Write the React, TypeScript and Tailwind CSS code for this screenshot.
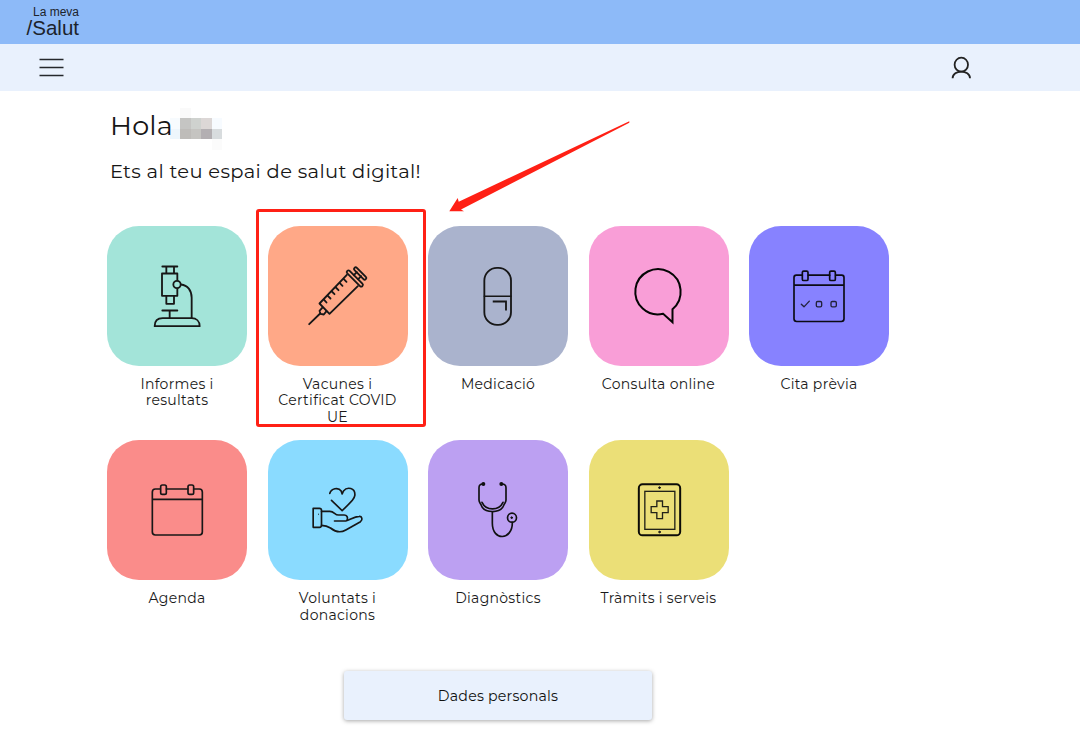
import type { ReactNode } from 'react'

interface TileItem {
  label: string
  color: string
  icon: ReactNode
  highlighted?: boolean
}

function TileIcon({ viewBox, children }: { viewBox: string; children: ReactNode }) {
  return (
    <svg
      viewBox={viewBox}
      className="h-full w-full"
      fill="none"
      stroke="#171717"
      strokeWidth={5.5}
      strokeLinecap="round"
      strokeLinejoin="round"
    >
      {children}
    </svg>
  )
}

const microscope = (
  <TileIcon viewBox="-99 -73.5 420 420">
    <path d="M67 48H112M79 48V69M102 48V69M66 69H112V136H66ZM79 136V160H102V136" />
    <path d="M123 102C143 104 155 120 155 142V203M67 180H112M89 180V203" />
    <path d="M44 227H179C179 212 169 203 155 203H68C53 203 44 212 44 227Z" />
    <circle cx="111" cy="102" r="11" fill="#a3e4d9" />
  </TileIcon>
)

const syringe = (
  <TileIcon viewBox="-82.5 -73.5 420 420">
    <path d="M41 221L74 189M154 73L72 159L102 190L187 107" />
    <path d="M80 172L72 181L75 190L85 192L93 182" />
    <path d="M86 148L93 156M97 136L105 144M109 123L117 131M121 111L129 119M133 98L141 106M145 86L153 94" />
    <rect x="-32" y="-5" width="64" height="10" rx="5" transform="translate(178 84) rotate(45)" />
    <rect x="-24" y="-5" width="48" height="10" rx="5" transform="translate(194 69) rotate(45)" />
    <path d="M175 74L184 65M188 86L197 77" />
  </TileIcon>
)

const pill = (
  <TileIcon viewBox="-111 -88.5 420 420">
    <rect x="58" y="37" width="80" height="171" rx="38" />
    <path d="M58 122H138" strokeWidth={4.5} />
    <path d="M86 138H123V162" strokeLinecap="square" strokeLinejoin="miter" />
  </TileIcon>
)

const bubble = (
  <TileIcon viewBox="-94.5 -88.5 420 420">
    <path
      d="M156 161A68 68 0 1 0 128 175L156 200Z"
      stroke="#050505"
      strokeWidth={6}
      strokeLinejoin="miter"
    />
  </TileIcon>
)

const appointment = (
  <TileIcon viewBox="387 -88.5 420 420">
    <g stroke="#0b0b14" strokeWidth={5}>
      <path d="M547 59H529Q522 59 522 66V190Q522 198 530 198H664Q672 198 672 190V66Q672 59 665 59H647M565 59H629M522 89H672" />
      <rect x="547" y="47" width="17" height="28" rx="4" />
      <rect x="629" y="47" width="17" height="28" rx="4" />
    </g>
    <g stroke="#22223a" strokeWidth={4}>
      <path d="M544 146L552 154L568 137" />
      <rect x="589" y="138" width="16" height="16" rx="4" />
      <rect x="633" y="138" width="16" height="16" rx="4" />
    </g>
  </TileIcon>
)

const agenda = (
  <TileIcon viewBox="-99 -90 420 420">
    <g strokeWidth={5}>
      <path d="M61 57H46Q37 57 37 66V186Q37 195 46 195H178Q187 195 187 186V66Q187 57 178 57H161M79 57H144M37 88H187" />
      <rect x="62" y="45" width="17" height="28" rx="5" />
      <rect x="144" y="45" width="17" height="28" rx="5" />
    </g>
  </TileIcon>
)

const donation = (
  <TileIcon viewBox="382.5 -90 420 420">
    <g strokeWidth={5}>
      <path d="M568 70C572 56 593 50 602 63L605 72L609 63C620 49 645 53 643 76C642 85 637 91 605 122L573 91" />
      <path d="M518 115H537Q543 115 543 121V166Q543 172 537 172H518Z" />
      <path d="M543 124H568C582 124 582 135 594 135H611C619 135 623 142 620 149" />
      <path d="M582 153H616C627 151 640 140 656 139C664 138 668 149 660 155L616 180C598 190 581 183 570 174C561 168 555 166 543 166" />
    </g>
    <path d="M534 132V134" strokeWidth={2} />
  </TileIcon>
)

const stethoscope = (
  <TileIcon viewBox="-96 -90 420 420">
    <g stroke="#111" strokeWidth={5}>
      <path d="M68 42C59 42 57 46 57 53V90C57 97 61 99 63 104C72 131 122 132 132 104C134 99 138 97 138 90V53C138 46 135 42 126 42" />
      <path d="M66 97C78 123 117 123 129 97M97 126V160C97 214 157 212 157 158" />
      <circle cx="70" cy="42" r="3.5" fill="#111" />
      <circle cx="124" cy="42" r="3.5" fill="#111" />
      <circle cx="156" cy="143" r="13.5" />
      <circle cx="155" cy="143" r="2.5" fill="#111" strokeWidth={3} />
    </g>
  </TileIcon>
)

const tablet = (
  <TileIcon viewBox="-94.5 -90 420 420">
    <rect x="55" y="43" width="124" height="153" rx="11" stroke="#0c0c08" strokeWidth={6} />
    <rect x="73" y="64" width="90" height="114" stroke="#222218" strokeWidth={4} strokeLinejoin="miter" />
    <path
      d="M109 93H126V110H143V128H126V146H109V128H92V110H109Z"
      stroke="#222218"
      strokeWidth={4}
      strokeLinejoin="miter"
    />
    <circle cx="117" cy="53" r="2.5" fill="#171717" strokeWidth={3} />
    <circle cx="117" cy="186" r="2.5" fill="#171717" strokeWidth={3} />
  </TileIcon>
)

const tiles: TileItem[] = [
  { label: 'Informes i resultats', color: 'bg-[#a3e4d9]', icon: microscope },
  { label: 'Vacunes i Certificat COVID UE', color: 'bg-[#ffa887]', icon: syringe, highlighted: true },
  { label: 'Medicació', color: 'bg-[#aab3cd]', icon: pill },
  { label: 'Consulta online', color: 'bg-[#f99ed7]', icon: bubble },
  { label: 'Cita prèvia', color: 'bg-[#8782ff]', icon: appointment },
  { label: 'Agenda', color: 'bg-[#fa8c8a]', icon: agenda },
  { label: 'Voluntats i donacions', color: 'bg-[#8adbff]', icon: donation },
  { label: 'Diagnòstics', color: 'bg-[#bca0f2]', icon: stethoscope },
  { label: 'Tràmits i serveis', color: 'bg-[#ebdf77]', icon: tablet },
]

// Pixelated user name, row by row
const nameBlocks = [
  'bg-transparent', 'bg-[#fafafa]', 'bg-white', 'bg-white', 'bg-white',
  'bg-[#f7fbfe]', 'bg-[#c5c5c3]', 'bg-[#cfd2cf]', 'bg-[#dcd7d6]', 'bg-[#f7fbff]',
  'bg-[#eef6fc]', 'bg-[#bebcb9]', 'bg-[#c5c4c1]', 'bg-[#b3afb2]', 'bg-[#d8dcde]',
  'bg-transparent', 'bg-white', 'bg-white', 'bg-white', 'bg-[#fbfbfb]',
]

function Tile({ item }: { item: TileItem }) {
  return (
    <div className="relative flex flex-col items-center">
      <div className={`h-[140px] w-[140px] rounded-[32px] ${item.color}`}>{item.icon}</div>
      <p className="mt-[10px] w-[132px] text-center text-[14px] leading-[16.5px] tracking-[0.3px] text-[#1a1a1a]">
        {item.label}
      </p>
      {item.highlighted && (
        <div className="absolute -left-[11.5px] -top-[16.5px] h-[218px] w-[170px] rounded-[3px] border-[3px] border-[#ff2015]" />
      )}
    </div>
  )
}

export default function App() {
  return (
    <div className="relative h-[740px] w-[1080px] overflow-hidden bg-white font-[Montserrat,Inter,sans-serif] text-[#161616]">
      <header>
        <div className="h-11 bg-[#8dbaf8] pt-[5px] pl-[26px]">
          <div className="w-[53px] text-right font-['Liberation_Sans',Arial,sans-serif] text-[#1c232b]">
            <div className="text-[12px] leading-[14px]">La meva</div>
            <div className="text-[20.5px] leading-[18px]">/Salut</div>
          </div>
        </div>
        <div className="flex h-[47px] items-center justify-between bg-[#e9f1fd] pr-[108px] pl-[39px]">
          <svg width="25" height="20" viewBox="0 0 25 20" stroke="#25282c" strokeWidth="1.5">
            <path d="M.5 1.5H24.5M.5 9.5H24.5M.5 17.5H24.5" />
          </svg>
          <svg width="22" height="24" viewBox="0 0 22 24" fill="none" stroke="#222" strokeWidth="1.8">
            <ellipse cx="11.3" cy="8.7" rx="6.7" ry="7" />
            <path d="M2.6 22.3C2.6 13.3 20 13.3 20 22.3" />
          </svg>
        </div>
      </header>

      <main>
        <div className="flex h-[60px] pl-[110px]">
          <h1 className="z-10 mt-[19px] w-[59.5px] text-[27px] leading-[32px] tracking-[0.2px] whitespace-nowrap">Hola</h1>
          <div className="mt-[16.5px] grid h-[42px] grid-cols-[repeat(5,10.5px)] grid-rows-[repeat(4,10.5px)]">
            {nameBlocks.map((color, i) => (
              <div key={i} className={color} />
            ))}
          </div>
        </div>
        <h2 className="h-[74.5px] pt-[6px] pl-[110px] text-[19.5px] leading-[28px] tracking-[0.33px]">
          Ets al teu espai de salut digital!
        </h2>

        <div className="ml-[107px] grid auto-rows-[214.5px] grid-cols-[repeat(5,140px)] gap-x-[20.5px]">
          {tiles.map((item) => (
            <Tile key={item.label} item={item} />
          ))}
        </div>

        <button className="mt-[16.5px] ml-[344px] block h-[49px] w-[308px] rounded-[3px] bg-[#e9f1fd] pt-[3px] text-[14.2px] tracking-[0.2px] text-[#111] shadow-[0_1px_4px_rgba(0,0,0,0.35)]">
          Dades personals
        </button>
      </main>

      <svg className="absolute top-[115px] left-[440px]" width="200" height="105" viewBox="440 115 200 105">
        <path d="M449.3 211.3L457.7 198L458.7 201.8L629.3 121.2L629.3 122.8L461 209.5L464 211.3Z" fill="#ff2015" />
      </svg>
    </div>
  )
}
